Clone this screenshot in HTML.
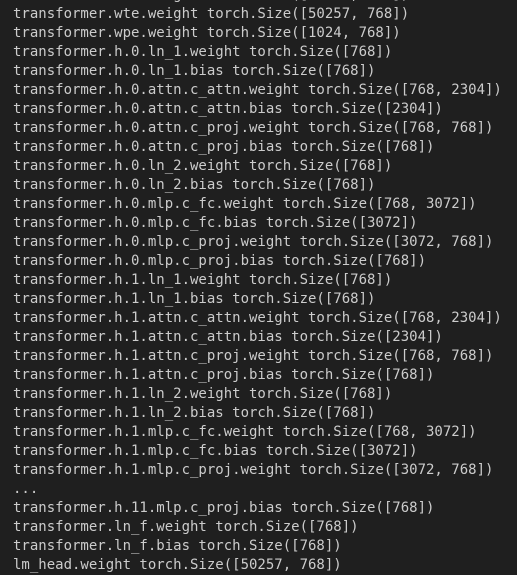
<!DOCTYPE html>
<html><head><meta charset="utf-8"><style>
html,body{margin:0;padding:0;background:#1f1f1f;width:517px;height:574px;overflow:hidden}
pre{margin:0;position:absolute;left:13px;top:-14px;font-family:"DejaVu Sans Mono","Liberation Mono",monospace;font-size:14px;line-height:19px;color:#cccccc}
</style></head><body><pre>transformer.wte.weight torch.Size([50257, 768])
transformer.wte.weight torch.Size([50257, 768])
transformer.wpe.weight torch.Size([1024, 768])
transformer.h.0.ln_1.weight torch.Size([768])
transformer.h.0.ln_1.bias torch.Size([768])
transformer.h.0.attn.c_attn.weight torch.Size([768, 2304])
transformer.h.0.attn.c_attn.bias torch.Size([2304])
transformer.h.0.attn.c_proj.weight torch.Size([768, 768])
transformer.h.0.attn.c_proj.bias torch.Size([768])
transformer.h.0.ln_2.weight torch.Size([768])
transformer.h.0.ln_2.bias torch.Size([768])
transformer.h.0.mlp.c_fc.weight torch.Size([768, 3072])
transformer.h.0.mlp.c_fc.bias torch.Size([3072])
transformer.h.0.mlp.c_proj.weight torch.Size([3072, 768])
transformer.h.0.mlp.c_proj.bias torch.Size([768])
transformer.h.1.ln_1.weight torch.Size([768])
transformer.h.1.ln_1.bias torch.Size([768])
transformer.h.1.attn.c_attn.weight torch.Size([768, 2304])
transformer.h.1.attn.c_attn.bias torch.Size([2304])
transformer.h.1.attn.c_proj.weight torch.Size([768, 768])
transformer.h.1.attn.c_proj.bias torch.Size([768])
transformer.h.1.ln_2.weight torch.Size([768])
transformer.h.1.ln_2.bias torch.Size([768])
transformer.h.1.mlp.c_fc.weight torch.Size([768, 3072])
transformer.h.1.mlp.c_fc.bias torch.Size([3072])
transformer.h.1.mlp.c_proj.weight torch.Size([3072, 768])
...
transformer.h.11.mlp.c_proj.bias torch.Size([768])
transformer.ln_f.weight torch.Size([768])
transformer.ln_f.bias torch.Size([768])
lm_head.weight torch.Size([50257, 768])</pre></body></html>
